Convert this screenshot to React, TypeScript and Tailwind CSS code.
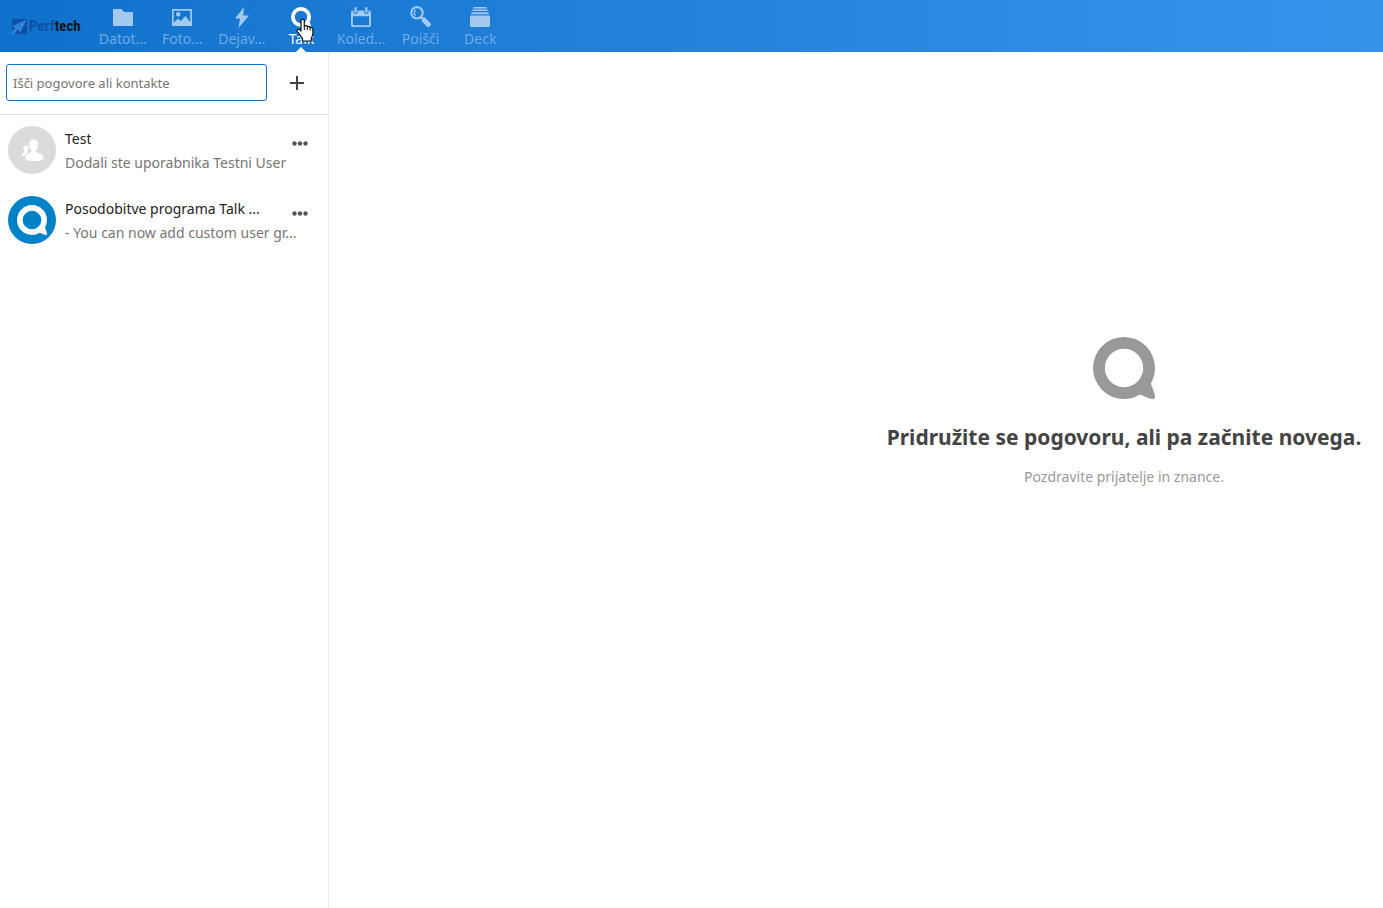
import type { ReactNode } from 'react';

const TALK_PATH =
  'M7.9992 0.999a6.9993 6.9994 0 0 0 -6.9992 6.9996 6.9993 6.9994 0 0 0 6.9992 6.9994 6.9993 6.9994 0 0 0 3.6308 -1.024c0.86024 0.34184 2.7871 1.356 3.2457 0.91794 0.47922 -0.45765 -0.56261 -2.6116 -0.81238 -3.412a6.9993 6.9994 0 0 0 0.935 -3.4814 6.9993 6.9994 0 0 0 -6.9991 -6.9993zm0.0008 2.6611a4.34 4.3401 0 0 1 4.34 4.3401 4.34 4.3401 0 0 1 -4.34 4.3398 4.34 4.3401 0 0 1 -4.34 -4.3398 4.34 4.3401 0 0 1 4.34 -4.34z';

function TalkIcon({ className }: { className: string }) {
  return (
    <svg viewBox="1 1 14 14" fill="currentColor" className={className} aria-hidden="true">
      <path d={TALK_PATH} />
    </svg>
  );
}

function AppIcon({ children }: { children: ReactNode }) {
  return (
    <svg viewBox="0 0 22 22" fill="currentColor" className="size-[22px]" aria-hidden="true">
      {children}
    </svg>
  );
}

type App = { label: string; icon: ReactNode; active?: boolean };

const apps: App[] = [
  {
    label: 'Datot...',
    icon: (
      <AppIcon>
        <path d="M2 3h7.5l2.5 3h8a1 1 0 0 1 1 1v12a1 1 0 0 1-1 1H2a1 1 0 0 1-1-1V4a1 1 0 0 1 1-1z" />
      </AppIcon>
    ),
  },
  {
    label: 'Foto...',
    icon: (
      <AppIcon>
        <path
          fillRule="evenodd"
          d="M1.6 3h18.8a.6.6 0 0 1 .6.6v15.8a.6.6 0 0 1-.6.6H1.6a.6.6 0 0 1-.6-.6V3.6a.6.6 0 0 1 .6-.6zM2.700 4.700v12l4.200-4 3 2.300 4.500-5 4.900 6V4.700z"
        />
        <circle cx="7.200" cy="8.200" r="2.200" />
      </AppIcon>
    ),
  },
  {
    label: 'Dejav...',
    icon: (
      <AppIcon>
        <path d="M13 1 4 12.500h5L7.500 22 18 9.500h-5.800z" />
      </AppIcon>
    ),
  },
  { label: 'Talk', icon: <TalkIcon className="size-5" />, active: true },
  {
    label: 'Koled...',
    icon: (
      <AppIcon>
        <path
          fillRule="evenodd"
          d="M3 4.500h.5V6a2.100 2.100 0 0 0 4.200 0V4.500h6.600V6a2.100 2.100 0 0 0 4.200 0V4.500h.5a2 2 0 0 1 2 2V19a2 2 0 0 1-2 2H3a2 2 0 0 1-2-2V6.500a2 2 0 0 1 2-2zM2.900 10.300v8.100a.8.8 0 0 0 .8.8h14.600a.8.8 0 0 0 .8-.8v-8.100z"
        />
        <rect x="4.500" y="1" width="2.200" height="6" rx="1.100" />
        <rect x="15.300" y="1" width="2.200" height="6" rx="1.100" />
      </AppIcon>
    ),
  },
  {
    label: 'Poišči',
    icon: (
      <AppIcon>
        <circle cx="7" cy="6.800" r="5.700" fill="none" stroke="currentColor" strokeWidth="2.100" />
        <path d="M5.600 9.500C3.800 8 4 5.200 5.800 4.200" fill="none" stroke="currentColor" strokeWidth="1.300" />
        <path d="M10.500 10.500l3 3" stroke="currentColor" strokeWidth="2.200" />
        <path d="M14 14l4.400 4.400" stroke="currentColor" strokeWidth="5" strokeLinecap="round" />
      </AppIcon>
    ),
  },
  {
    label: 'Deck',
    icon: (
      <AppIcon>
        <rect x="4.300" y="1" width="13.400" height="1.400" rx=".5" />
        <rect x="3.300" y="3.500" width="15.400" height="1.500" rx=".5" />
        <rect x="2.200" y="6.300" width="17.600" height="1.900" rx=".5" />
        <rect x="1" y="9.500" width="20" height="11.500" rx="1" />
      </AppIcon>
    ),
  },
];

function Logo() {
  return (
    <a href="#home" aria-label="Perftech" className="ml-3 flex w-[81px] shrink-0 items-center gap-[2px]">
      <svg viewBox="0 0 15 15" className="size-[15px] shrink-0" aria-hidden="true">
        <rect width="15" height="15" fill="#104fa6" />
        <path d="M0 7 14.500.8 8.500 13.500 5.800 10.500 2.500 15H0v-3.500L3.200 9z" fill="#2b82d8" />
        <path d="M0 9.500 3.200 9 0 12z" fill="#104fa6" />
      </svg>
      <span className="font-['Roboto_Condensed','Liberation_Sans_Narrow','Liberation_Sans',sans-serif] text-[15px] leading-4 font-bold text-[#104fa6]">
        Perf<span className="text-[#111820]">tech</span>
      </span>
    </a>
  );
}

function HandCursor() {
  return (
    <svg viewBox="0 0 18 24" className="pointer-events-none absolute top-[18px] left-6 h-6 w-[18px]" aria-hidden="true">
      <path
        d="M5 2.500a1.700 1.700 0 0 1 3.300 0V8c.8-.8 2.600-.5 3 .6.9-.6 2.400-.2 2.700.9 1.400-.4 2.900.4 2.900 2v4.500c0 1.500-1.400 3-1.600 4.500V23H6.500v-2.500C5.200 19 3.300 16 1.300 13.500c-1-1.500.7-3 2.200-1.800L5 13.200z"
        fill="#fff"
        stroke="#111"
        strokeWidth="1.200"
        strokeLinejoin="round"
      />
      <path d="M8.300 8v4M11.300 8.800V12M14.100 9.800v2.700" stroke="#111" strokeWidth="1.100" />
    </svg>
  );
}

function GroupAvatar() {
  return (
    <svg viewBox="0 0 48 48" className="size-12 shrink-0" aria-hidden="true">
      <circle cx="24" cy="24" r="24" fill="#dbdbdb" />
      <g fill="#fff">
        <path d="M25.600 13.500c2.800 0 4.600 2 4.600 5 0 2.500-.9 4-2 5.300-.4 1.500.1 2.500 1.600 3 3.300 1 5.400 1.800 5.600 4.200l.1 2.200C33 34.600 29.500 35 26 35s-6.500-.5-8.600-1.800l.2-2.700c.3-2 2.300-2.800 4.600-3.700 1.200-.5 1.500-1.500 1-3-1.300-1.300-2.200-3-2.200-5.300 0-3 1.800-5 4.600-5z" />
        <path d="M17.800 19.200c1.600 0 2.500 1.200 2.500 2.900 0 1.300-.4 2.200-1 2.800-.2.900.1 1.300 1 1.700-1.800.8-3.200 2-3.500 3.600-1.200 0-2.200-.3-3.100-.7 0-2 .6-2.500 2.300-3.100.6-.3.600-.8.400-1.500-.6-.6-1.100-1.500-1.100-2.800 0-1.700.9-2.900 2.500-2.900z" />
      </g>
    </svg>
  );
}

function TalkAvatar() {
  return (
    <span className="flex size-12 shrink-0 items-center justify-center rounded-full bg-[#0082c9] text-white">
      <TalkIcon className="size-[30px]" />
    </span>
  );
}

const conversations = [
  { name: 'Test', message: 'Dodali ste uporabnika Testni User', avatar: <GroupAvatar /> },
  { name: 'Posodobitve programa Talk ...', message: '- You can now add custom user gr...', avatar: <TalkAvatar /> },
];

export default function App() {
  return (
    <div className="flex min-h-screen flex-col bg-white font-['Noto_Sans','Open_Sans',sans-serif]">
      <header className="flex h-[52px] items-stretch bg-linear-to-r from-[#0f71cc] to-[#3594ea]">
        <Logo />
        <nav aria-label="Aplikacije" className="grid w-[417px] grid-cols-7">
          {apps.map((app) => (
            <a
              key={app.label}
              href={`#${app.label}`}
              className={`relative flex flex-col items-center pt-[6px] text-center text-sm leading-[22px] ${
                app.active ? 'text-white' : 'text-[#a3c9ef]'
              }`}
            >
              <span className="flex h-[22px] items-center justify-center">{app.icon}</span>
              <span className={app.active ? '' : 'text-[#6dabe6]'}>{app.label}</span>
              {app.active && (
                <>
                  <svg viewBox="0 0 10 5" className="absolute bottom-0 h-[5px] w-[10px]" aria-hidden="true">
                    <path d="M0 5 5 0l5 5z" fill="#fff" />
                  </svg>
                  <HandCursor />
                </>
              )}
            </a>
          ))}
        </nav>
      </header>

      <div className="flex grow">
        <aside className="w-[329px] shrink-0 border-r border-[#ededed]">
          <div className="flex items-center border-b border-[#dbdbdb] pt-3 pb-[13px] pl-[6px]">
            <input
              type="text"
              aria-label="Išči pogovore ali kontakte"
              placeholder="Išči pogovore ali kontakte"
              className="h-[37px] w-[261px] rounded-[3px] border border-[#1173cd] px-[6px] text-[13px] text-[#222] outline-none placeholder:text-[#767676]"
            />
            <button type="button" aria-label="Nov pogovor" className="-my-1 ml-2 flex size-11 items-center justify-center">
              <svg viewBox="0 0 14 14" className="size-[14px]" aria-hidden="true">
                <path d="M6 0h2v6h6v2H8v6H6V8H0V6h6z" fill="#444" />
              </svg>
            </button>
          </div>
          <ul className="flex flex-col">
            {conversations.map((c) => (
              <li key={c.name} className="flex h-[70px] items-center gap-[9px] px-2">
                {c.avatar}
                <div className="min-w-0 grow pt-[2px]">
                  <div className="flex h-6 items-center justify-between">
                    <a href="#pogovor" className="truncate text-sm leading-6 text-[#222]">
                      {c.name}
                    </a>
                    <button type="button" aria-label="Možnosti" className="mt-2 flex h-6 w-10 items-center justify-center">
                      <svg viewBox="0 0 16 5" className="h-[5px] w-4" fill="#555" aria-hidden="true">
                        <circle cx="2.500" cy="2.500" r="2.200" />
                        <circle cx="8" cy="2.500" r="2.200" />
                        <circle cx="13.500" cy="2.500" r="2.200" />
                      </svg>
                    </button>
                  </div>
                  <p className="text-sm leading-6 whitespace-nowrap text-[#767676]">{c.message}</p>
                </div>
              </li>
            ))}
          </ul>
        </aside>

        <main className="flex grow flex-col items-center pt-[285px] pl-[536px] text-center">
          <TalkIcon className="size-[62px] text-[#999]" />
          <h1 className="mt-[22px] text-[21px] leading-8 font-bold whitespace-nowrap text-[#444]">
            Pridružite se pogovoru, ali pa začnite novega.
          </h1>
          <p className="mt-3 text-sm leading-6 text-[#999]">Pozdravite prijatelje in znance.</p>
        </main>
      </div>
    </div>
  );
}
